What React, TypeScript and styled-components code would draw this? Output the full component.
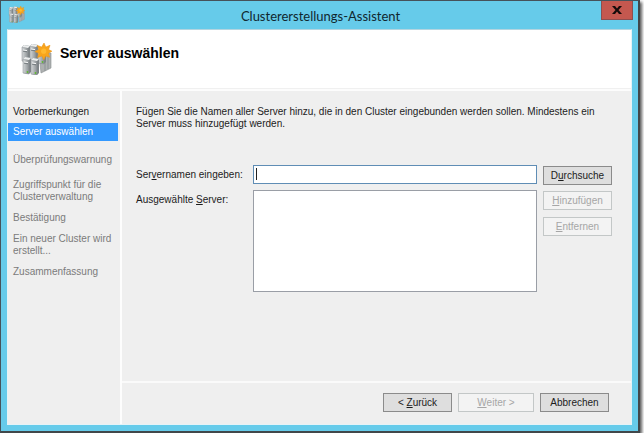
import React from "react";
import styled, { createGlobalStyle, css } from "styled-components";

const GlobalStyle = createGlobalStyle`
  * { box-sizing: border-box; }
  html, body { margin: 0; padding: 0; background: #ffffff; }
  body {
    font-family: "Liberation Sans", Arial, sans-serif;
    font-size: 10px;
    line-height: 12px;
    color: #1c1c1c;
  }
`;

const Window = styled.div`
  display: flex;
  flex-direction: column;
  min-height: calc(100vh - 4px);
  margin-right: 4px;
  background: #66cbea;
  border: 1px solid #46525a;
  border-right: 2px solid #41474a;
  border-bottom: 2px solid #41474a;
  box-shadow: 2px 2px 3px rgba(0, 0, 0, 0.65);
`;

const TitleBar = styled.header`
  display: grid;
  grid-template-columns: 36px 1fr 36px;
  align-items: start;
  height: 28px;
  padding: 0 5px 0 7px;
`;

const TitleIcon = styled.div`
  padding-top: 5px;
  line-height: 0;
`;

const Title = styled.h1`
  margin: 0;
  padding-top: 5px;
  font: 400 13px/20px Lato, "Open Sans", sans-serif;
  color: #10272f;
  text-align: center;
`;

const CloseButton = styled.button`
  display: flex;
  align-items: center;
  justify-content: center;
  justify-self: end;
  width: 32px;
  height: 19px;
  padding: 0;
  border: 1px solid #8c4f50;
  border-top: 0;
  background: #c4584f;
`;

const Client = styled.main`
  display: flex;
  flex: 1;
  flex-direction: column;
  margin: 0 6px 6px;
  border: 1px solid #e6f3f7;
  border-top-color: #b4d5e0;
  background: #efefef;
`;

const Header = styled.div`
  display: flex;
  gap: 8px;
  height: 59px;
  padding: 13px 12px 0;
  border-bottom: 1px solid #f0f0f0;
  background: #ffffff;
`;

const Heading = styled.h2`
  margin: 0;
  padding-top: 2px;
  font: 700 14px/16px "Liberation Sans", Arial, sans-serif;
  color: #000000;
`;

const Body = styled.div`
  display: grid;
  flex: 1;
  grid-template-columns: 114px 1fr;
  border-top: 2px solid #fcfcfc;
`;

const Steps = styled.ol`
  margin: 0;
  padding: 15px 2px 0 0;
  border-right: 2px solid #fdfdfd;
  list-style: none;
`;

type StepState = "done" | "current" | "pending";

const Step = styled.li<{ $state: StepState; $tight?: boolean }>`
  margin-top: ${(p) => (p.$tight ? 9 : 13)}px;
  padding: 0 4px 0 5px;
  color: #7b7b7b;
  ${(p) =>
    p.$state === "done" &&
    css`
      margin-top: 0;
      color: #1c1c1c;
    `}
  ${(p) =>
    p.$state === "current" &&
    css`
      margin-top: 5px;
      padding-top: 3px;
      padding-bottom: 3px;
      background: #3399ff;
      color: #ffffff;
    `}
`;

const Page = styled.form`
  display: flex;
  flex-direction: column;
`;

const Content = styled.div`
  flex: 1;
  padding: 15px 19px 0 14px;
`;

const Intro = styled.p`
  max-width: 470px;
  margin: 0 0 35px;
`;

const Fields = styled.div`
  display: grid;
  grid-template-columns: 117px 1fr 75px;
  row-gap: 5px;
`;

const Label = styled.label`
  padding-top: 4px;
`;

const ServerInput = styled.input`
  width: 100%;
  height: 19px;
  padding: 0 4px;
  border: 1px solid #5f8db5;
  background: linear-gradient(#222222, #222222) 2px 2px / 1px 12px no-repeat #ffffff;
  font: inherit;
  outline: 0;
`;

const ServerList = styled.select`
  width: 100%;
  height: 102px;
  padding: 0;
  border: 1px solid #9a9ea6;
  border-radius: 0;
  background: #ffffff;
  font: inherit;
  outline: 0;
`;

const ButtonColumn = styled.div`
  display: flex;
  flex-direction: column;
  gap: 7px;
  padding: 1px 0 0 6px;
`;

const Button = styled.button<{ $wide?: boolean }>`
  width: ${(p) => (p.$wide ? 76 : 69)}px;
  height: 19px;
  padding: 0;
  border: 1px solid #8b8b8b;
  background: #dedede;
  color: #1c1c1c;
  font: inherit;
  white-space: nowrap;

  &:disabled {
    border-color: #c3c7c7;
    background: #f3f3f3;
    color: #a6a6a6;
  }
`;

const Footer = styled.footer`
  display: flex;
  justify-content: flex-end;
  gap: 6px;
  padding: 10px 22px 12px 0;
  border-top: 2px solid #fafafa;
`;

const towers = [
  [2, 3],
  [10, 2],
  [18, 5],
  [3, 15],
  [11, 16],
];

function ClusterIcon({ size }: { size: number }) {
  return (
    <svg width={size} height={size} viewBox="0 0 32 32" aria-hidden="true">
      <defs>
        <linearGradient id={`tower${size}`}>
          <stop offset="0" stopColor="#d4d7d8" />
          <stop offset="1" stopColor="#8c9295" />
        </linearGradient>
      </defs>
      <path d="M19 11l12-1v15l-10 5z" fill="#aeb1b1" stroke="#888d8f" strokeWidth=".6" />
      <path d="M25 12v16M28 12v14" stroke="#80868a" strokeWidth=".7" />
      {towers.map(([x, y]) => (
        <g key={`${x}-${y}`} transform={`translate(${x} ${y})`}>
          <path d="M0 1l2-2 6 1v14l-2 2-6-1z" fill="#7e8487" />
          <path d="M0 1l6 1v14l-6-1z" fill={`url(#tower${size})`} stroke="#858b8e" strokeWidth=".5" />
          <path d="M0 1l2-2 6 1-2 2z" fill="#eceeee" />
          <path d="M1 4l4 .6" stroke="#f5f6f6" strokeWidth="1" />
          <path d="M1 5.2l4 .6" stroke="#676e72" strokeWidth=".8" />
          <circle cx="4.5" cy="14" r=".9" fill="#5dbb2c" />
        </g>
      ))}
      <path
        d="M24 0l1.8 4.1L30 2.3l-1.4 4.2 3.3 1.7-3.5 2 1.3 4.1-4.1-1.4L23.8 17l-1.9-4.1-4.3 1.6 1.2-4.2L15 8.6l3.8-2-1.5-4.2 4.4 1.7z"
        fill="#f9a51b"
        stroke="#e9951c"
        strokeWidth=".6"
      />
      <circle cx="23.7" cy="8.2" r="2.6" fill="#ffb930" />
    </svg>
  );
}

const steps: { text: string; state: StepState; tight?: boolean }[] = [
  { text: "Vorbemerkungen", state: "done" },
  { text: "Server auswählen", state: "current" },
  { text: "Überprüfungswarnung", state: "pending" },
  { text: "Zugriffspunkt für die Clusterverwaltung", state: "pending" },
  { text: "Bestätigung", state: "pending", tight: true },
  { text: "Ein neuer Cluster wird erstellt...", state: "pending", tight: true },
  { text: "Zusammenfassung", state: "pending", tight: true },
];

export default function App() {
  return (
    <>
      <GlobalStyle />
      <Window>
        <TitleBar>
          <TitleIcon>
            <ClusterIcon size={17} />
          </TitleIcon>
          <Title>Clustererstellungs-Assistent</Title>
          <CloseButton type="button" aria-label="Schließen">
            <svg width="10" height="8" viewBox="0 0 10 8" aria-hidden="true">
              <path d="M0 0h3l2 2.4L7 0h3L6.5 3.9 10 8H7L5 5.4 3 8H0l3.5-4.1z" fill="#140b0a" />
            </svg>
          </CloseButton>
        </TitleBar>
        <Client>
          <Header>
            <ClusterIcon size={32} />
            <Heading>Server auswählen</Heading>
          </Header>
          <Body>
            <Steps>
              {steps.map((s) => (
                <Step key={s.text} $state={s.state} $tight={s.tight}>
                  {s.text}
                </Step>
              ))}
            </Steps>
            <Page onSubmit={(e) => e.preventDefault()}>
              <Content>
                <Intro>
                  Fügen Sie die Namen aller Server hinzu, die in den Cluster eingebunden werden
                  sollen. Mindestens ein Server muss hinzugefügt werden.
                </Intro>
                <Fields>
                  <Label htmlFor="server-name">
                    Ser<u>v</u>ernamen eingeben:
                  </Label>
                  <ServerInput id="server-name" type="text" />
                  <ButtonColumn>
                    <Button type="button">
                      D<u>u</u>rchsuche
                    </Button>
                  </ButtonColumn>
                  <Label htmlFor="server-list">
                    Ausgewählte <u>S</u>erver:
                  </Label>
                  <ServerList id="server-list" multiple />
                  <ButtonColumn>
                    <Button type="button" disabled>
                      <u>H</u>inzufügen
                    </Button>
                    <Button type="button" disabled>
                      <u>E</u>ntfernen
                    </Button>
                  </ButtonColumn>
                </Fields>
              </Content>
              <Footer>
                <Button type="button">
                  &lt; <u>Z</u>urück
                </Button>
                <Button type="submit" $wide disabled>
                  <u>W</u>eiter &gt;
                </Button>
                <Button type="button">Abbrechen</Button>
              </Footer>
            </Page>
          </Body>
        </Client>
      </Window>
    </>
  );
}
